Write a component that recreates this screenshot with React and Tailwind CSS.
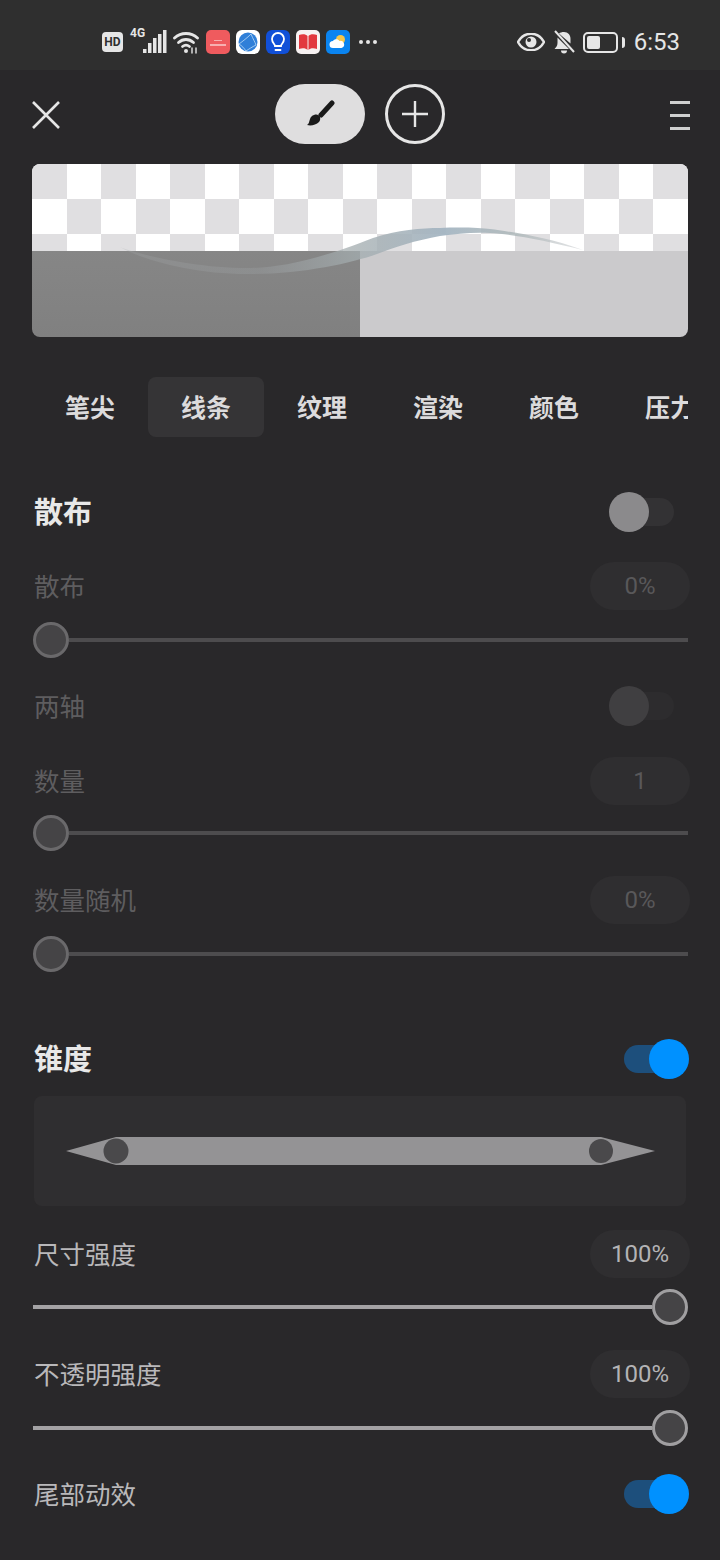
const cjk = { fontFamily: '"Noto Sans CJK SC", "Noto Sans", sans-serif' };
const tabs = ["笔尖", "线条", "纹理", "渲染", "颜色", "压力"];

const Toggle = ({ mode = "off" }) => {
  const track = mode === "on" ? "bg-[#1d4f7c]" : mode === "off" ? "bg-[#333234]" : "bg-[#2d2c2e]";
  const thumb = mode === "on" ? "bg-[#0091ff]" : mode === "off" ? "bg-[#8b8a8c]" : "bg-[#403f41]";
  return (
    <div className="relative w-[81px] h-10 shrink-0">
      <div className={`absolute top-[6px] h-7 w-11 rounded-full ${mode === "on" ? "left-[15px]" : "left-[21px]"} ${track}`} />
      <div className={`absolute top-0 w-10 h-10 rounded-full ${mode === "on" ? "left-[40px]" : "left-0"} ${thumb}`} />
    </div>
  );
};

const ValueRow = ({ label, value, active, className = "" }) => (
  <div className={`flex items-center justify-between h-12 pl-[34px] pr-[30px] ${className}`}>
    <span className={`text-[25.5px] leading-none pb-[3px] ${active ? "text-[#b9b8ba]" : "text-[#5e5d5f]"}`}>{label}</span>
    <span
      className={`w-[100px] h-12 rounded-full bg-[#2f2e30] flex items-center justify-center text-[24px] leading-none ${active ? "text-[#b4b3b5]" : "text-[#59585a]"}`}
      style={{ fontFamily: "Roboto, sans-serif" }}
    >
      {value}
    </span>
  </div>
);

const Slider = ({ full, className = "" }) => (
  <div className={`flex items-center h-10 pl-[33px] pr-[32px] ${className}`}>
    {full ? (
      <>
        <div className="flex-1 h-1 bg-[#a3a2a4]" />
        <div className="w-9 h-9 rounded-full bg-[#454446] border-[3px] border-[#a09fa1] shrink-0" />
      </>
    ) : (
      <>
        <div className="w-9 h-9 rounded-full bg-[#454446] border-[3px] border-[#6a696b] shrink-0" />
        <div className="flex-1 h-1 bg-[#4d4c4e]" />
      </>
    )}
  </div>
);

const Heading = ({ title, mode, className = "" }) => (
  <div className={`flex items-center justify-between pl-[34px] pr-[30px] h-10 ${className}`}>
    <span className="text-[29px] font-bold leading-none text-[#e8e8e8] pb-[3px]">{title}</span>
    <Toggle mode={mode} />
  </div>
);

const StatusBar = () => (
  <div className="h-[70px] bg-[#2f2f2f] flex items-center pl-[102px] pr-10 pt-[14px]">
    <div className="w-[21px] h-5 rounded-[4px] bg-[#e6e6e6] flex items-center justify-center text-[12px] font-bold text-[#2f2f2f] leading-none" style={{ fontFamily: "Roboto, sans-serif" }}>
      HD
    </div>
    {/* signal */}
    <div className="relative w-[37px] h-6 ml-[7px]">
      <span className="absolute left-0 -top-[3px] text-[12px] font-bold text-[#e6e6e6] leading-none" style={{ fontFamily: "Roboto, sans-serif" }}>4G</span>
      <svg width="37" height="24" viewBox="0 0 37 24" fill="#e6e6e6">
        <rect x="13" y="19" width="3.500" height="4" />
        <rect x="18" y="13" width="3.500" height="10" />
        <rect x="23" y="8" width="3.500" height="15" />
        <rect x="28" y="4" width="3.500" height="19" />
        <rect x="33" y="0" width="3.500" height="23" />
      </svg>
    </div>
    {/* wifi */}
    <svg className="ml-[6px]" width="27" height="23" viewBox="0 0 27 23" fill="none" stroke="#e6e6e6" strokeWidth="2.800" strokeLinecap="round">
      <path d="M1.500 7C8 1 18 1 24.500 7" />
      <path d="M5.500 11.500C10 7.500 16 7.500 20.500 11.500" />
      <path d="M9.500 15.500C11.500 14 14.500 14 16.500 15.500" />
      <circle cx="13" cy="20" r="2" fill="#e6e6e6" stroke="none" />
      <path d="M19 17v5M23 17v5" strokeWidth="1.400" />
    </svg>
    {/* app icons */}
    <div className="ml-[6px] w-6 h-6 rounded-[5px] bg-[#ef5b5e] flex flex-col items-center justify-center gap-[3px]">
      <div className="w-2 h-[3px] border-b border-[#f7b0b0]" />
      <div className="w-4 h-[2px] bg-[#f7b0b0]" />
    </div>
    <div className="ml-[6px] w-6 h-6 rounded-[6px] bg-white flex items-center justify-center">
      <svg width="20" height="20" viewBox="0 0 20 20">
        <circle cx="10" cy="10" r="9.500" fill="#2f7fd8" />
        <path d="M1 12C5 9 9 6 13 2c2 5 4 8 5 11-4 2-7 4-10 6-2-3-4-5-7-7z" fill="none" stroke="#bcdcf7" strokeWidth="0.800" />
      </svg>
    </div>
    <div className="ml-[6px] w-6 h-6 rounded-[6px] bg-[#1150d8] flex items-center justify-center">
      <svg width="16" height="20" viewBox="0 0 16 20" fill="none" stroke="#fff" strokeWidth="1.800">
        <path d="M5 14c0-2-3-3-3-7a6 6 0 0 1 12 0c0 4-3 5-3 7z" />
        <path d="M5.500 18h5" strokeLinecap="round" />
      </svg>
    </div>
    <div className="ml-[6px] w-6 h-6 rounded-[5px] bg-[#f7f2f2] flex items-center justify-center">
      <svg width="20" height="16" viewBox="0 0 20 16" fill="#e2383f">
        <path d="M1 1c3-1 7-1 8.500 1v14C8 14 4 14 1 15z" />
        <path d="M19 1c-3-1-7-1-8.500 1v14c1.500-2 5.500-2 8.500-1z" />
      </svg>
    </div>
    <div className="ml-[6px] w-6 h-6 rounded-[5px] bg-[#0a84f0] flex items-center justify-center">
      <svg width="20" height="18" viewBox="0 0 20 18">
        <circle cx="12.500" cy="6.500" r="4.500" fill="#f6c64a" />
        <path d="M5 15a3.500 3.500 0 0 1 0-7c1-2 5-2.500 6.500 0a3.500 3.500 0 0 1 2 7z" fill="#fff" />
      </svg>
    </div>
    <div className="ml-[9px] flex gap-[3px]">
      <div className="w-1 h-1 rounded-full bg-[#e6e6e6]" />
      <div className="w-1 h-1 rounded-full bg-[#e6e6e6]" />
      <div className="w-1 h-1 rounded-full bg-[#e6e6e6]" />
    </div>
    <div className="flex-1" />
    {/* eye */}
    <svg width="28" height="18" viewBox="0 0 28 18">
      <path d="M1 9C7-2 21-2 27 9 21 20 7 20 1 9z" fill="none" stroke="#e6e6e6" strokeWidth="2.400" />
      <circle cx="14" cy="9" r="5.500" fill="#e6e6e6" />
      <circle cx="12" cy="7" r="2" fill="#2f2f2f" />
    </svg>
    {/* muted bell */}
    <svg className="ml-2" width="22" height="24" viewBox="0 0 22 24" fill="#e6e6e6">
      <path d="M11 2c4 0 6.500 3 6.500 7v4.500L6 3.500C7 2.500 9 2 11 2z" />
      <path d="M4.500 7.500L16 19H1.500c1.500-1.500 3-3 3-6z" />
      <path d="M8 20.500h6a3 3 0 0 1-6 0z" />
      <path d="M2 1l19 21" stroke="#e6e6e6" strokeWidth="2" />
    </svg>
    {/* battery */}
    <div className="ml-2 w-[35px] h-[21px] rounded-[5px] border-2 border-[#e6e6e6] p-[2px]">
      <div className="w-[13px] h-full rounded-[2px] bg-[#e6e6e6]" />
    </div>
    <div className="ml-1 w-[3px] h-[11px] rounded-r-sm bg-[#e6e6e6]" />
    <span className="ml-[9px] text-[24px] leading-none text-[#e6e6e6]" style={{ fontFamily: "Roboto, sans-serif" }}>6:53</span>
  </div>
);

const Preview = () => (
  <div className="relative mx-8 h-[173px] rounded-lg overflow-hidden">
    <div className="grid grid-cols-19 h-[87px] grid-rows-[35px_35px_17px] bg-white">
      {Array.from({ length: 57 }).map((_, i) => {
        const row = Math.floor(i / 19);
        const col = i % 19;
        return <div key={i} className={(row + col) % 2 === 0 ? "bg-[#e0dfe1]" : "bg-white"} />;
      })}
    </div>
    <div className="flex h-[86px]">
      <div className="flex-1 bg-gradient-to-b from-[#868686] to-[#808080]" />
      <div className="flex-1 bg-[#cbcacc]" />
    </div>
    <svg className="absolute inset-0" width="656" height="173" viewBox="0 0 656 173">
      <defs>
        <linearGradient id="stroke" gradientUnits="userSpaceOnUse" x1="88" x2="551" y1="0" y2="0">
          <stop offset="0" stopColor="#a5a8aa" stopOpacity="0.25" />
          <stop offset="0.3" stopColor="#a0a5a8" stopOpacity="0.3" />
          <stop offset="0.5" stopColor="#a3acae" stopOpacity="0.75" />
          <stop offset="0.7" stopColor="#a4b5c2" stopOpacity="0.95" />
          <stop offset="0.85" stopColor="#a9b4b6" stopOpacity="0.8" />
          <stop offset="1" stopColor="#c5c8cb" stopOpacity="0.5" />
        </linearGradient>
      </defs>
      <path
        d="M88 83C105 90 165 105 220 104C250 103 285 96 341 74C365 66 390 64 408 64C430 63 450 64 458 65C480 68 515 73 551 86C515 77 480 70 458 69C440 68 425 70 408 72C385 76 360 84 345 90C320 99 270 110 220 110C165 111 110 96 88 83Z"
        fill="url(#stroke)"
      />
    </svg>
  </div>
);

export default function App() {
  return (
    <div className="w-[720px] h-[1560px] bg-[#29282a] overflow-hidden" style={cjk}>
      <StatusBar />

      {/* toolbar */}
      <div className="relative flex items-center justify-center gap-5 h-[94px] pb-[7px]">
        <svg className="absolute left-[31px] top-[30px]" width="30" height="30" viewBox="0 0 30 30" fill="none" stroke="#e6e6e6" strokeWidth="2.600">
          <path d="M2 2l26 26M28 2L2 28" />
        </svg>
        <div className="w-[90px] h-[60px] rounded-full bg-[#dfdedf] flex items-center justify-center">
          <svg width="30" height="28" viewBox="0 0 30 28" fill="#1a1a1a">
            <path d="M27 3L16 15" stroke="#1a1a1a" strokeWidth="5" strokeLinecap="round" />
            <path d="M9 15c3-1 5 0 6 2 .5 2 0 4-1 5-3 3-8 4-12 3 2-1 2-3 3-6 .7-2 2-3.500 4-4z" />
          </svg>
        </div>
        <div className="w-[60px] h-[60px] rounded-full border-[3px] border-[#e6e6e6] flex items-center justify-center">
          <svg width="26" height="26" viewBox="0 0 26 26" stroke="#e6e6e6" strokeWidth="2.400">
            <path d="M13 0v26M0 13h26" />
          </svg>
        </div>
        <div className="absolute left-[670px] top-[31px] flex flex-col gap-[10px]">
          <div className="w-5 h-[3px] bg-[#d0d0d0]" />
          <div className="w-5 h-[3px] bg-[#d0d0d0]" />
          <div className="w-5 h-[3px] bg-[#d0d0d0]" />
        </div>
      </div>

      <Preview />

      {/* tabs */}
      <div className="mx-8 mt-10 flex overflow-hidden">
        {tabs.map((t, i) => (
          <div
            key={t}
            className={`w-[116px] h-[60px] shrink-0 rounded-lg flex items-center justify-center text-[25px] font-bold text-[#dcdbdc] ${i === 1 ? "bg-[#353436]" : ""}`}
          >
            {t}
          </div>
        ))}
      </div>

      <Heading title="散布" mode="off" className="mt-[55px]" />
      <ValueRow label="散布" value="0%" className="mt-[30px]" />
      <Slider className="mt-[10px]" />

      <div className="flex items-center justify-between h-12 pl-[34px] pr-[30px] mt-[22px]">
        <span className="text-[25.5px] leading-none text-[#5e5d5f] pb-[3px]">两轴</span>
        <Toggle mode="dim" />
      </div>
      <ValueRow label="数量" value="1" className="mt-[27px]" />
      <Slider className="mt-2" />
      <ValueRow label="数量随机" value="0%" className="mt-[23px]" />
      <Slider className="mt-[10px]" />

      <Heading title="锥度" mode="on" className="mt-[65px]" />
      <div className="mx-[34px] mt-[17px] h-[110px] rounded-lg bg-[#2f2e30] flex items-center justify-center">
        <svg width="652" height="110" viewBox="0 0 652 110">
          <path d="M32 55L82 41H567L621 55L567 69H82Z" fill="#949395" />
          <circle cx="82" cy="55" r="12.500" fill="#4a494b" />
          <circle cx="567" cy="55" r="12" fill="#4a494b" />
        </svg>
      </div>

      <ValueRow label="尺寸强度" value="100%" active className="mt-6" />
      <Slider full className="mt-[9px]" />
      <ValueRow label="不透明强度" value="100%" active className="mt-[23px]" />
      <Slider full className="mt-[10px]" />
      <div className="flex items-center justify-between h-12 pl-[34px] pr-[30px] mt-[22px]">
        <span className="text-[25.5px] leading-none text-[#b9b8ba] pb-[3px]">尾部动效</span>
        <Toggle mode="on" />
      </div>
    </div>
  );
}
